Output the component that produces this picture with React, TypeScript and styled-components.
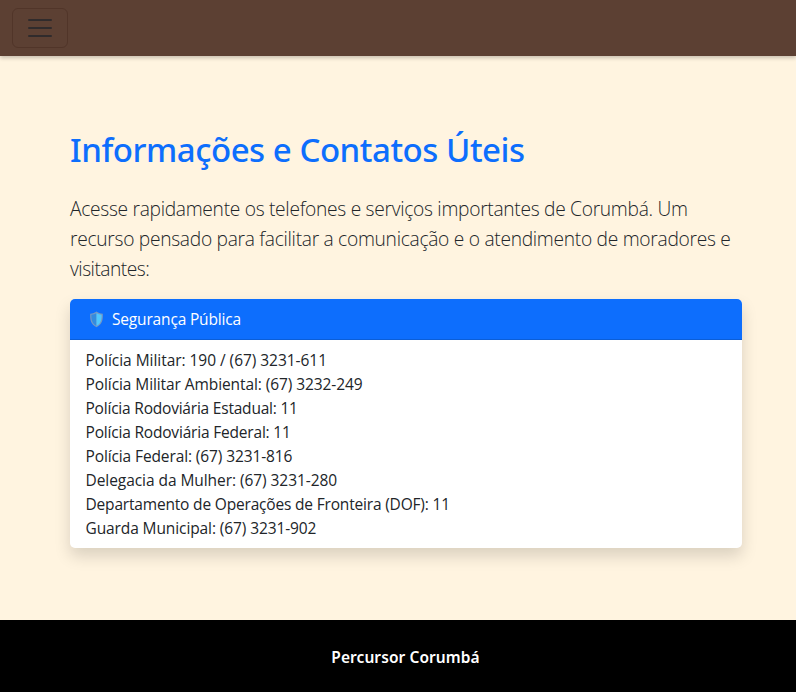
import React from 'react';
import styled, { createGlobalStyle } from 'styled-components';

const GlobalStyle = createGlobalStyle`
  *, *::before, *::after { box-sizing: border-box; }
  body {
    margin: 0;
    background: #fff4e0;
    color: #212529;
    font-family: "Open Sans", "Noto Sans", sans-serif;
    font-size: 15.5px;
    line-height: 24px;
  }
`;

const Page = styled.div`
  display: flex;
  flex-direction: column;
  min-height: 692px;
`;

const Navbar = styled.nav`
  display: flex;
  align-items: center;
  height: 56px;
  padding: 8px 12px;
  background: #5c4033;
  box-shadow: 0 2px 4px rgba(0, 0, 0, 0.22);
`;

const Toggler = styled.button`
  display: flex;
  align-items: center;
  justify-content: center;
  width: 56px;
  height: 40px;
  padding: 0;
  border: 1px solid #513529;
  border-radius: 6px;
  background: transparent;
`;

const Main = styled.main`
  flex: 1;
  padding: 72px 54px 72px 70px;
`;

const Title = styled.h1`
  margin: 0;
  color: #0d6efd;
  font-family: "Noto Sans", sans-serif;
  font-size: 33px;
  font-weight: 500;
  line-height: 44px;
  letter-spacing: -0.46px;
`;

const Lead = styled.p`
  margin: 22px 0 15px;
  font-size: 19.2px;
  font-weight: 300;
  line-height: 30px;
`;

const Line = styled.span<{ $tracking: number }>`
  display: block;
  letter-spacing: ${({ $tracking }) => $tracking}px;
  white-space: nowrap;
`;

const Card = styled.section`
  overflow: hidden;
  border-radius: 5px;
  background: #fff;
  box-shadow: 0 8px 16px rgba(0, 0, 0, 0.15);
`;

const CardHeader = styled.header`
  display: flex;
  align-items: center;
  gap: 8px;
  height: 41px;
  padding: 0 19px;
  border-bottom: 1px solid #0b5ed7;
  background: #0d6efd;
  color: #fff;
`;

const ContactList = styled.ul`
  margin: 0;
  padding: 8px 15.5px;
  list-style: none;
`;

const Footer = styled.footer`
  display: flex;
  align-items: center;
  justify-content: center;
  height: 72px;
  padding: 1px 0 0 15px;
  background: #000;
  color: #fff;
  font-family: "Noto Sans", sans-serif;
  font-weight: 600;
`;

const MenuIcon = () => (
  <svg width="30" height="30" viewBox="0 0 30 30" fill="none" aria-hidden="true">
    <path d="M4 7h22M4 15h22M4 23h22" stroke="#302b2c" strokeWidth="2" strokeLinecap="round" />
  </svg>
);

const ShieldIcon = () => (
  <svg width="15" height="17" viewBox="0 0 15 17" aria-hidden="true">
    <path
      d="M7.5 .6C6 1.9 3.7 2.6 1.2 2.7C.9 8.7 1.7 13.4 7.5 16.2C13.3 13.4 14.1 8.7 13.8 2.7C11.3 2.6 9 1.9 7.5 .6Z"
      fill="#7498c5"
    />
    <path d="M7.5 2C6 3 4.3 3.5 2.4 3.7C2.3 8.8 3.1 12.5 7.5 14.9Z" fill="#338bdf" />
    <path d="M7.5 2C9 3 10.7 3.5 12.6 3.7C12.7 8.8 11.9 12.5 7.5 14.9Z" fill="#50c8ff" />
  </svg>
);

const lead = [
  { text: 'Acesse rapidamente os telefones e serviços importantes de Corumbá. Um', tracking: -0.295 },
  { text: 'recurso pensado para facilitar a comunicação e o atendimento de moradores e', tracking: -0.287 },
  { text: 'visitantes:', tracking: -0.5 },
];

const contacts = [
  { text: 'Polícia Militar: 190 / (67) 3231-611', tracking: -0.04 },
  { text: 'Polícia Militar Ambiental: (67) 3232-249', tracking: -0.085 },
  { text: 'Polícia Rodoviária Estadual: 11', tracking: -0.21 },
  { text: 'Polícia Rodoviária Federal: 11', tracking: -0.19 },
  { text: 'Polícia Federal: (67) 3231-816', tracking: -0.115 },
  { text: 'Delegacia da Mulher: (67) 3231-280', tracking: -0.06 },
  { text: 'Departamento de Operações de Fronteira (DOF): 11', tracking: -0.18 },
  { text: 'Guarda Municipal: (67) 3231-902', tracking: -0.105 },
];

export default function App() {
  return (
    <>
      <GlobalStyle />
      <Page>
        <Navbar>
          <Toggler type="button" aria-label="Menu">
            <MenuIcon />
          </Toggler>
        </Navbar>
        <Main>
          <Title>Informações e Contatos Úteis</Title>
          <Lead>
            {lead.map(({ text, tracking }) => (
              <Line key={text} $tracking={tracking}>{text} </Line>
            ))}
          </Lead>
          <Card>
            <CardHeader>
              <ShieldIcon />
              <Line $tracking={-0.17}>Segurança Pública</Line>
            </CardHeader>
            <ContactList>
              {contacts.map(({ text, tracking }) => (
                <li key={text}>
                  <Line $tracking={tracking}>{text}</Line>
                </li>
              ))}
            </ContactList>
          </Card>
        </Main>
        <Footer>
          <Line $tracking={0.08}>Percursor Corumbá</Line>
        </Footer>
      </Page>
    </>
  );
}
